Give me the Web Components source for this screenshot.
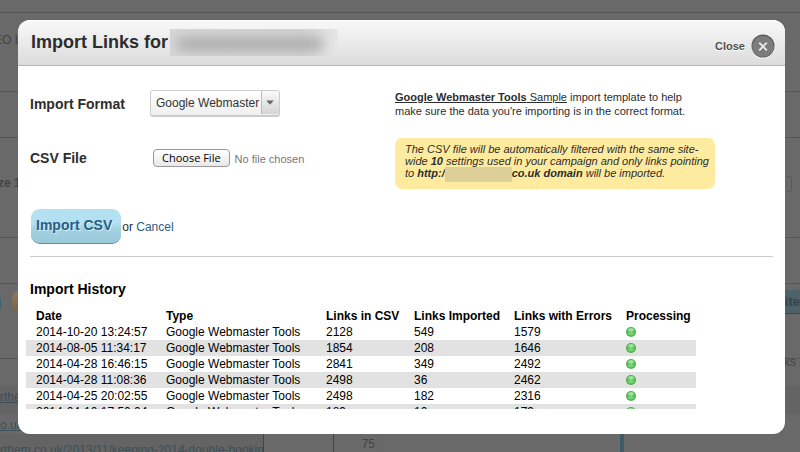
<!DOCTYPE html>
<html lang="en">
<head>
<meta charset="utf-8">
<meta name="viewport" content="width=device-width, initial-scale=1">
<title>Import Links</title>
<style>
  body {
    margin: 0;
    height: 100vh;
    overflow: hidden;
    background: #696969;
    font-family: "Liberation Sans", Arial, sans-serif;
    font-size: 12px;
    color: #000;
  }
</style>
</head>
<body>
<campaign-page></campaign-page>

<modal-dialog>
  <span slot="title">Import Links for</span>
  <redacted-text slot="title" class="site"></redacted-text>
  <import-form></import-form>
  <import-history></import-history>
</modal-dialog>

<script>
const define = (name, markup, setup) => {
  const template = document.createElement('template');
  template.innerHTML = markup;

  window.customElements.define(name, class extends HTMLElement {
    constructor() {
      super();
      this._shadowRoot = this.attachShadow({ mode: 'open' });
      this._shadowRoot.appendChild(template.content.cloneNode(true));
      if (setup) setup(this._shadowRoot);
    }
  });
};

// dimmed page behind the dialog
define('campaign-page', `
<style>
  :host {
    display: block;
    height: 100vh;
    overflow: hidden;
    color: #444;
    white-space: nowrap;
  }

  .row {
    display: flex;
    justify-content: space-between;
    align-items: flex-start;
    box-sizing: border-box;
    border-bottom: 1px solid #555;
  }

  .top { height: 13px; }
  .nav { height: 79px; padding-top: 20px; }
  .bar { height: 46px; }
  .size { height: 100px; padding-top: 38px; font-weight: bold; }
  .nav span { margin-left: -6px; }
  .size span { margin-left: -2px; }
  .actions { height: 75px; padding-top: 6px; }
  .head { height: 27px; border: 0; }
  .link { height: 28px; padding-top: 4px; border: 0; }
  .link.alt { background: #646464; }
  .link.last { height: 20px; }
  .link a { color: #3b4f58; }

  .drop {
    width: 5px;
    height: 14px;
    margin-right: 8px;
    border: 1px solid #5c5c5c;
    border-left: 0;
    border-radius: 0 3px 3px 0;
  }

  .pill {
    width: 30px;
    height: 22px;
    margin: 1px auto 0 11px;
    border-radius: 7px;
    background: linear-gradient(#8a7860, #7d6347);
  }

  .mark {
    width: 1px;
    height: 10px;
    margin-top: 8px;
    background: #3b6470;
  }

  .site {
    padding: 0 0 0 1px;
    line-height: 23px;
    border-bottom: 1px solid #444;
    background: #4d6268;
    color: #34444f;
    font-size: 13px;
    font-weight: bold;
  }

  .ks { margin: -4px 4px 0 0; }

  .bottom {
    display: grid;
    grid-template-columns: 264px 70px 48px 1fr 176px;
    height: 18px;
  }

  .bottom > * {
    box-sizing: border-box;
    border-right: 1px solid #444;
  }

  .bottom .url { padding-top: 9px; background: #646464; }
  .bottom .url a { color: #3b4f58; }
  .bottom .count { border-color: #646464; padding: 3px 6px 0 0; text-align: right; }
  .bottom .chart { border-right: 4px solid #3d5a68; }
  .bottom .end { border: 0; }
</style>

<div class="row top"></div>
<div class="row nav"><span>EO L</span></div>
<div class="row bar"></div>
<div class="row size"><span>ze 1</span><i class="drop"></i></div>
<div class="row bar"></div>
<div class="row actions"><i class="mark"></i><i class="pill"></i><span class="site">ite</span></div>
<div class="row head"><span></span><span class="ks">ks</span></div>
<div class="row link alt"><a href="#/link">rthe</a></div>
<div class="row link last"><a href="#/link">o.uk</a></div>
<div class="bottom">
  <span class="url"><a href="#/link">rthem.co.uk/2013/11/keeping-2014-double-bookin</a></span>
  <span></span>
  <span class="count">75</span>
  <span class="chart"></span>
  <span class="end"></span>
</div>
`);

define('redacted-text', `
<style>
  :host {
    display: inline-block;
    overflow: hidden;
    vertical-align: middle;
    height: 15px;
    background: #ddcf98;
  }

  :host(.site) {
    width: 168px;
    height: 27px;
    background: linear-gradient(90deg, #d6d6d6, #d4d4d4 80%, #e6e6e6);
  }

  i {
    display: none;
    height: 12px;
    margin: 9px 16px 0 8px;
    background: #aaa;
    filter: blur(6px);
  }

  :host(.site) i { display: block; }
</style>
<i></i>
`);

define('modal-dialog', `
<style>
  :host {
    position: absolute;
    top: 20px;
    left: 18px;
    right: 15px;
    border-radius: 12px;
    overflow: hidden;
    background: #fff;
  }

  header {
    display: flex;
    align-items: center;
    justify-content: space-between;
    box-sizing: border-box;
    height: 46px;
    padding: 0 10px 2px 13px;
    border-top: 1px solid #fff;
    border-bottom: 1px solid #b4b4b4;
    background: linear-gradient(#f8f8f8, #dcdcdc);
  }

  h1 {
    display: flex;
    align-items: center;
    gap: 2px;
    margin: 0;
    font-size: 18px;
    color: #2d2d2d;
  }

  .close {
    display: flex;
    align-items: center;
    gap: 6px;
    padding: 8px 0 0;
    border: 0;
    background: none;
    font: bold 11px "Liberation Sans", Arial, sans-serif;
    color: #505050;
    text-shadow: 0 1px #fff;
    cursor: pointer;
  }

  .body { padding: 24px 12px 25px; }
</style>

<header>
  <h1><slot name="title"></slot></h1>
  <button class="close" type="button">
    Close
    <svg width="24" height="25" viewBox="0 0 24 25">
      <circle cx="12" cy="13" r="11.5" fill="#fafafa"/>
      <circle cx="12" cy="12" r="11.5" fill="#5c5c5c"/>
      <circle cx="12" cy="12.5" r="10.6" fill="#7c7c7c"/>
      <path d="M8.3 9.3l7.4 7.4M15.7 9.3l-7.4 7.4" stroke="#555" stroke-width="2.4"/>
      <path d="M8.2 8.8l7.6 7.6M15.8 8.8l-7.6 7.6" stroke="#e6e6e6" stroke-width="2.1"/>
    </svg>
  </button>
</header>
<div class="body"><slot></slot></div>
`);

define('import-form', `
<style>
  :host {
    display: block;
    padding-bottom: 12px;
    border-bottom: 1px solid #ccc;
    color: #2d2d2d;
  }

  form {
    display: grid;
    grid-template-columns: 365px minmax(0, 320px);
  }

  .field {
    display: grid;
    grid-template-columns: 120px 1fr;
    align-items: center;
    height: 27px;
    margin-bottom: 27px;
  }

  label {
    font-size: 14px;
    font-weight: bold;
  }

  .select {
    display: grid;
    grid-template-columns: 111px 19px;
    width: 130px;
    height: 27px;
  }

  select {
    grid-area: 1 / 1 / 2 / 3;
    box-sizing: border-box;
    width: 130px;
    padding: 0 18px 1px 5px;
    appearance: none;
    border: 1px solid #ccc;
    border-bottom-width: 2px;
    border-radius: 3px;
    background: linear-gradient(#fff, #efefef);
    font: 12px "Liberation Sans", Arial, sans-serif;
    color: #333;
  }

  .arrow {
    grid-area: 1 / 2;
    margin: 1px 1px 2px 0;
    border-left: 1px solid #bbb;
    border-radius: 0 2px 2px 0;
    background: linear-gradient(#fafafa, #d4d4d4);
    pointer-events: none;
  }

  input {
    width: 200px;
    margin-left: 3px;
    font: 11px "Liberation Sans", Arial, sans-serif;
    color: #777;
  }

  input::file-selector-button {
    box-sizing: border-box;
    height: 18px;
    margin-right: 5px;
    padding: 0 8px;
    border: 1px solid #999;
    border-radius: 4px;
    background: linear-gradient(#fff, #f4f4f4 50%, #e8e8e8);
    font: 11px "Open Sans", sans-serif;
    color: #000;
  }

  .help p {
    margin: 0 0 20px;
    font-size: 11px;
    line-height: 14px;
  }

  .help a { color: inherit; }

  .help .note {
    margin: 0;
    padding: 5px 4px 10px 10px;
    border-radius: 7px;
    background: #ffeb9f;
    font-style: italic;
    line-height: 12px;
  }

  .actions {
    display: flex;
    align-items: center;
    gap: 1px;
    padding-top: 11px;
  }

  .actions button {
    height: 35px;
    margin-left: 1px;
    padding: 0 9px 2px 5px;
    border: 0;
    border-bottom: 1px solid #6b8b96;
    border-radius: 9px;
    background: linear-gradient(#b3e1f1 40%, #a2d2e2 60%, #9ac8d8);
    font: bold 14px "Liberation Sans", Arial, sans-serif;
    color: #2a5d84;
    text-shadow: 1px 1px #d3eff8;
    cursor: pointer;
  }

  .actions a {
    color: #2a5d84;
    text-decoration: none;
  }

  redacted-text {
    width: 67px;
    margin: -3px 0;
  }
</style>

<form>
  <div>
    <div class="field">
      <label for="format">Import Format</label>
      <span class="select">
        <select id="format"><option>Google Webmaster</option></select>
        <svg class="arrow" viewBox="0 0 18 24"><path d="M4.5 10h8l-4 4.5z" fill="#666"/></svg>
      </span>
    </div>
    <div class="field">
      <label for="file">CSV File</label>
      <input id="file" type="file">
    </div>
    <div class="actions">
      <button type="submit">Import CSV</button>
      <span>or <a href="#/cancel">Cancel</a></span>
    </div>
  </div>
  <div class="help">
    <p><a href="#/sample"><b>Google Webmaster Tools</b> Sample</a> import template to help<br>make sure the data you're importing is in the correct format.</p>
    <p class="note">The CSV file will be automatically filtered with the same site-<br>wide <b>10</b> settings used in your campaign and only links pointing<br>to <b>http:/<redacted-text></redacted-text>co.uk domain</b> will be imported.</p>
  </div>
</form>
`, (root) => {
  root.querySelector('form').addEventListener('submit', (e) => e.preventDefault());
});

const imports = [
  ['2014-10-20 13:24:57', 2128, 549, 1579],
  ['2014-08-05 11:34:17', 1854, 208, 1646],
  ['2014-04-28 16:46:15', 2841, 349, 2492],
  ['2014-04-28 11:08:36', 2498, 36, 2462],
  ['2014-04-25 20:02:55', 2498, 182, 2316],
  ['2014-04-10 17:50:04', 189, 10, 179],
];

define('import-history', `
<style>
  :host { display: block; }

  h2 {
    margin: 24px 0 10px;
    font-size: 14px;
    line-height: 17px;
  }

  .list {
    height: 101px;
    margin-left: -4px;
    overflow: hidden;
  }

  table {
    width: 670px;
    table-layout: fixed;
    border-collapse: collapse;
    line-height: 16px;
  }

  th, td {
    height: 16px;
    padding: 0 0 0 10px;
    text-align: left;
    white-space: nowrap;
  }

  tbody tr:nth-child(even) { background: #e2e2e2; }

  td svg { display: block; }
  .defs { position: absolute; }
</style>

<svg class="defs" width="0" height="0">
  <radialGradient id="led">
    <stop offset="0" stop-color="#a4e39c"/>
    <stop offset="0.6" stop-color="#6bcb66"/>
    <stop offset="1" stop-color="#3fae45"/>
  </radialGradient>
</svg>
<h2>Import History</h2>
<div class="list">
  <table>
    <colgroup>
      <col style="width: 130px"><col style="width: 160px"><col style="width: 88px">
      <col style="width: 100px"><col style="width: 112px"><col style="width: 80px">
    </colgroup>
    <thead>
      <tr>
        <th>Date</th><th>Type</th><th>Links in CSV</th>
        <th>Links Imported</th><th>Links with Errors</th><th>Processing</th>
      </tr>
    </thead>
    <tbody></tbody>
  </table>
</div>
`, (root) => {
  root.querySelector('tbody').innerHTML = imports.map(([date, total, imported, errors]) => `
    <tr>
      <td>${date}</td><td>Google Webmaster Tools</td>
      <td>${total}</td><td>${imported}</td><td>${errors}</td>
      <td>
        <svg width="10" height="10" viewBox="0 0 10 10" role="img" aria-label="Done">
          <circle cx="5" cy="5" r="5" fill="url(#led)"/>
          <path d="M1 5h8" stroke="#35a83c" stroke-width="1" opacity=".5"/>
          <ellipse cx="5" cy="2.6" rx="2.8" ry="1.5" fill="#c5efc0" opacity=".6"/>
        </svg>
      </td>
    </tr>`).join('');
});
</script>
</body>
</html>
